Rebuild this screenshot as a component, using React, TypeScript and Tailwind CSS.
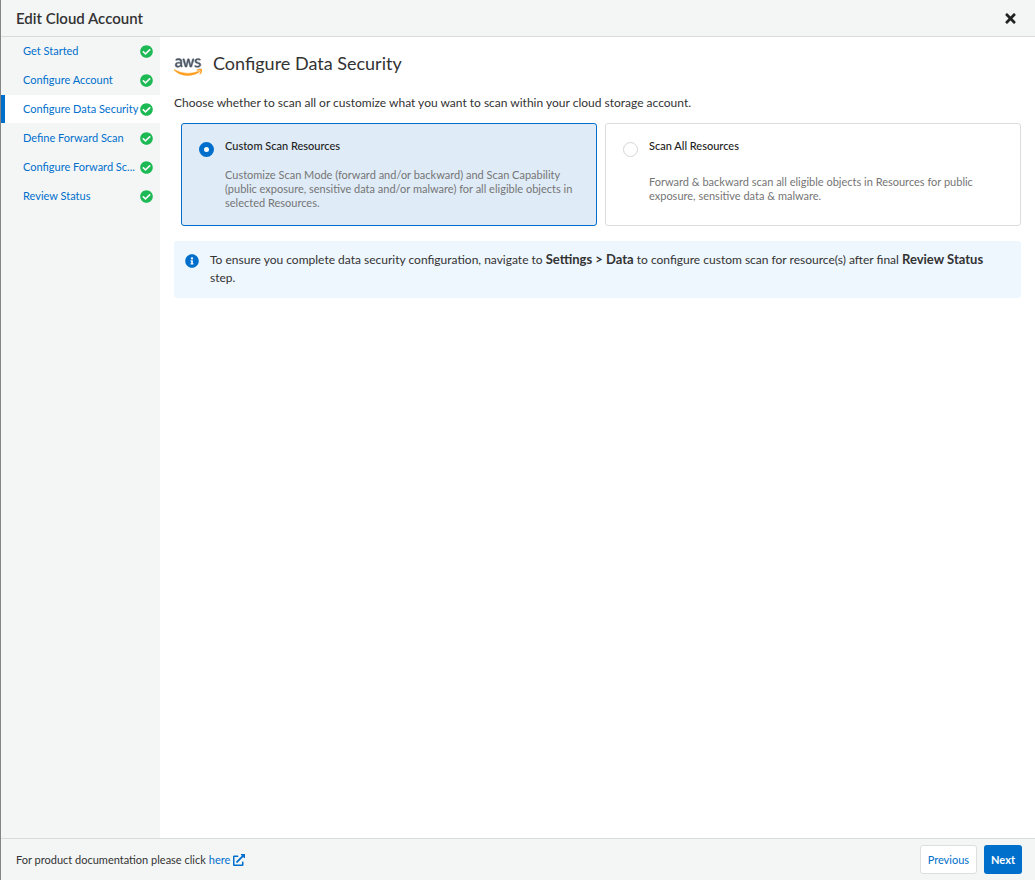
import { useState } from "react";
import { FaAws, FaCheckCircle, FaExternalLinkAlt, FaInfoCircle, FaTimes } from "react-icons/fa";

const steps = [
  "Get Started",
  "Configure Account",
  "Configure Data Security",
  "Define Forward Scan",
  "Configure Forward Sc...",
  "Review Status",
];

const options = [
  {
    id: "custom",
    title: "Custom Scan Resources",
    text: "Customize Scan Mode (forward and/or backward) and Scan Capability (public exposure, sensitive data and/or malware) for all eligible objects in selected Resources.",
  },
  {
    id: "all",
    title: "Scan All Resources",
    text: "Forward & backward scan all eligible objects in Resources for public exposure, sensitive data & malware.",
  },
];

function AwsLogo() {
  return (
    <>
      <svg className="absolute h-0 w-0" aria-hidden="true">
        <defs>
          <linearGradient id="aws-fill" x1="0" y1="0" x2="0" y2="1">
            <stop offset="0.64" stopColor="#4a5564" />
            <stop offset="0.64" stopColor="#ff9c1a" />
          </linearGradient>
        </defs>
      </svg>
      <FaAws
        fill="url(#aws-fill)"
        stroke="url(#aws-fill)"
        strokeWidth={12}
        className="h-7 w-7 shrink-0"
        aria-label="AWS"
      />
    </>
  );
}

export default function App() {
  const [selected, setSelected] = useState("custom");
  return (
    <div className="flex min-h-screen flex-col border-l border-[#858585] bg-white font-['Lato',sans-serif] text-[#333333]">
      <header className="flex h-[37px] shrink-0 items-center justify-between border-b border-[#d8dbdb] bg-[#f4f6f6] pr-[17px] pl-[15px]">
        <h1 className="pb-px text-[15px] leading-5 font-semibold">Edit Cloud Account</h1>
        <button type="button" aria-label="Close" className="text-[#222222]">
          <FaTimes className="h-[15px] w-[15px]" />
        </button>
      </header>

      <div className="flex grow">
        <nav aria-label="Steps" className="flex w-[159px] shrink-0 flex-col gap-px bg-[#f4f6f6] text-[11px] leading-4">
          {steps.map((step, i) => (
            <a
              key={step}
              href="#"
              aria-current={i === 2 ? "step" : undefined}
              className={`flex h-7 items-center justify-between border-l-4 pr-[7px] pl-[18px] whitespace-nowrap text-[#006fcc] ${
                i === 2 ? "border-[#006fcc] bg-white" : "border-transparent"
              }`}
            >
              {step}
              <FaCheckCircle className="h-[13px] w-[13px] shrink-0 text-[#1db954]" />
            </a>
          ))}
        </nav>

        <main className="min-w-0 grow pt-[14px] pr-[14px] pl-[14px]">
          <div className="flex h-8 items-center gap-[11px]">
            <AwsLogo />
            <h2 className="pb-2 text-[18px] leading-6">Configure Data Security</h2>
          </div>
          <p className="mt-[11px] text-[12px] leading-[18px]">
            Choose whether to scan all or customize what you want to scan within your cloud storage account.
          </p>

          <div className="mt-[11px] grid grid-cols-2 gap-2 pl-[7px]">
            {options.map((o) => {
              const on = selected === o.id;
              return (
                <label
                  key={o.id}
                  className={`flex h-full min-h-[103px] gap-[11px] rounded-[3px] border pr-4 pb-[14px] pl-[17px] ${
                    on ? "border-[#006fcc] bg-[#dfebf7]" : "border-[#dcdcdc] bg-white"
                  }`}
                >
                  <input
                    type="radio"
                    name="scan"
                    checked={on}
                    onChange={() => setSelected(o.id)}
                    className={`mt-[18px] h-[15px] w-[15px] shrink-0 appearance-none rounded-full bg-white ${
                      on ? "border-[5px] border-[#006fcc]" : "border border-[#d5d5d5]"
                    }`}
                  />
                  <span className="flex grow flex-col pt-[14px]">
                    <span className="text-[11px] leading-4 font-medium text-[#222222]">{o.title}</span>
                    <span className="flex grow items-center pt-3 text-[11px] leading-[14px] text-[#757575]">
                      <span>{o.text}</span>
                    </span>
                  </span>
                </label>
              );
            })}
          </div>

          <div className="mt-[15px] flex gap-[11px] rounded-[3px] bg-[#eef6fe] pt-[9px] pr-4 pb-[11px] pl-[11px] text-[12px] leading-[18px]">
            <FaInfoCircle className="mt-1 h-[14px] w-[14px] shrink-0 text-[#006fcc]" />
            <p>
              To ensure you complete data security configuration, navigate to{" "}
              <b className="text-[13px] font-bold">Settings &gt; Data</b> to configure custom scan for resource(s) after
              final <b className="text-[13px] font-bold">Review Status</b> step.
            </p>
          </div>
        </main>
      </div>

      <footer className="flex h-[42px] shrink-0 items-center justify-between border-t border-[#d8dbdb] bg-[#f4f6f6] pr-[13px] pl-[15px] text-[11px] leading-4">
        <p className="flex items-center gap-[3px]">
          For product documentation please click
          <a href="#" className="flex items-center gap-[3px] text-[#006fcc]">
            here <FaExternalLinkAlt className="h-3 w-3" />
          </a>
        </p>
        <div className="flex gap-[7px]">
          <button type="button" className="h-[29px] rounded-[3px] border border-[#dcdfdf] bg-white px-[7px] text-[#006fcc]">
            Previous
          </button>
          <button type="button" className="h-[29px] rounded-[3px] bg-[#006fcc] px-[7px] font-bold text-white">
            Next
          </button>
        </div>
      </footer>
    </div>
  );
}
